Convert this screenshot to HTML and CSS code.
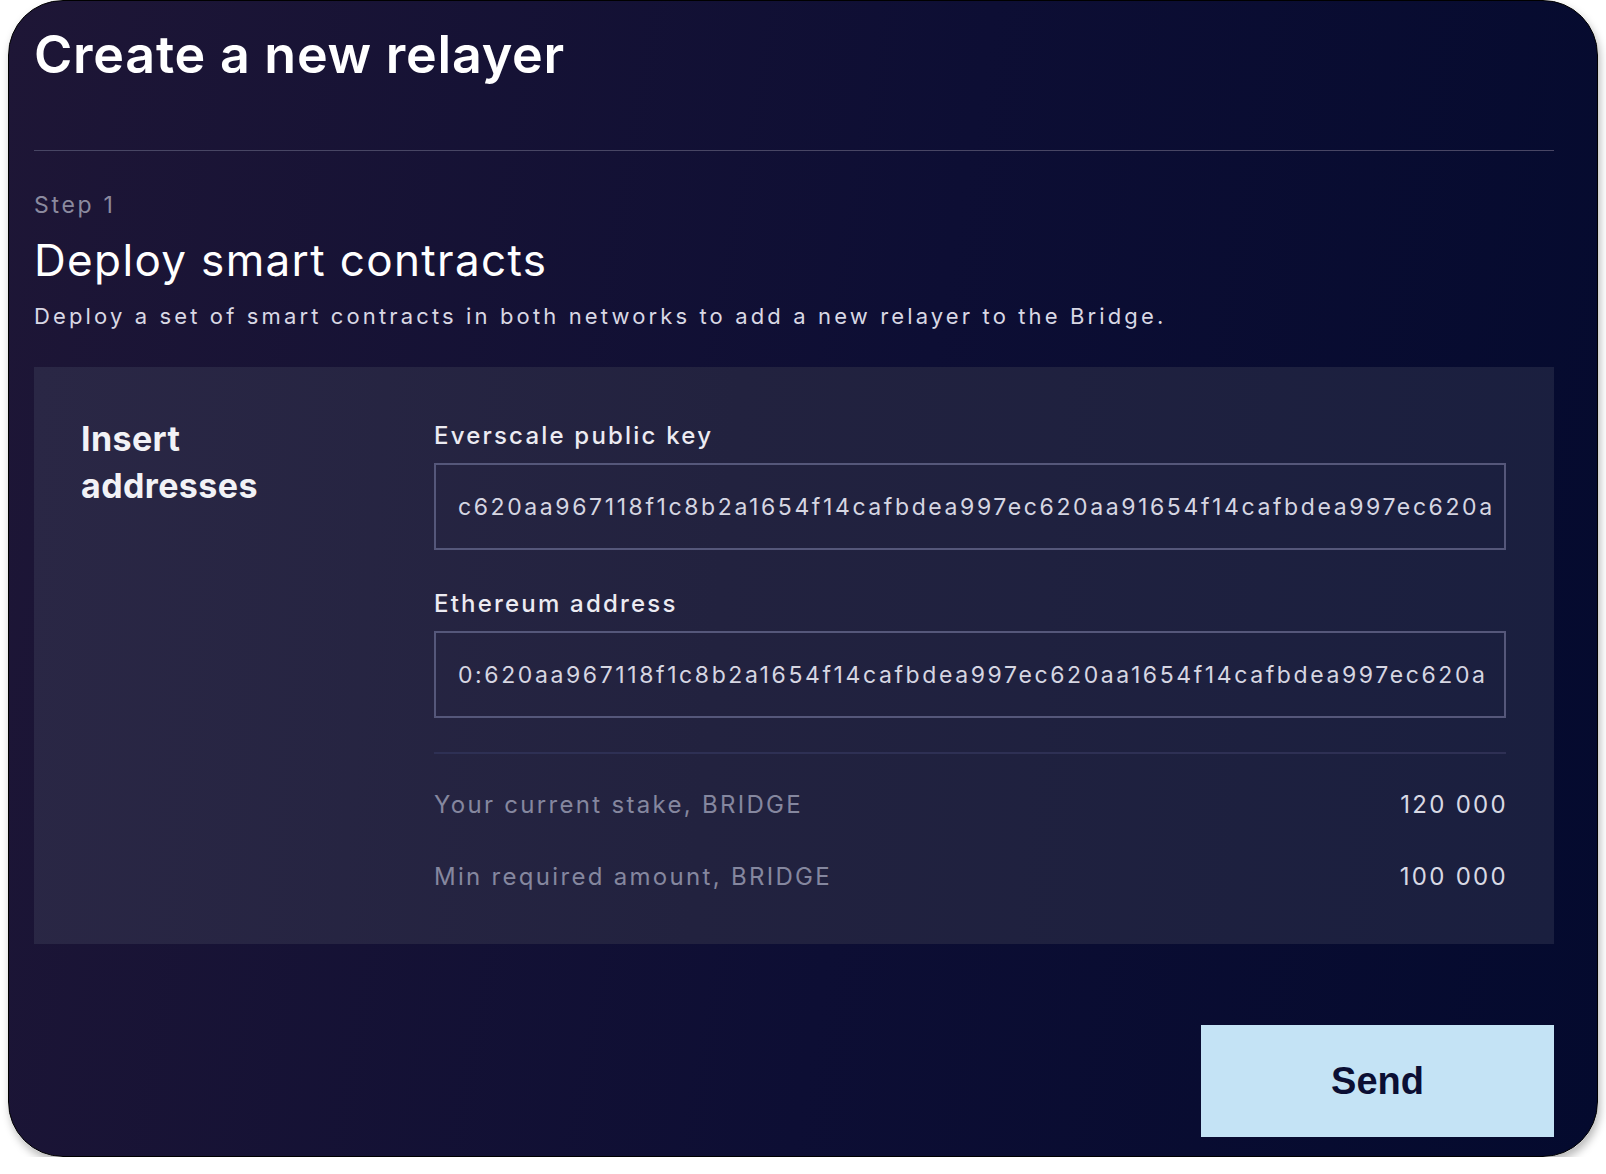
FILE: index.html
```html
<!DOCTYPE html>
<html lang="en">
<head>
<meta charset="utf-8">
<title>Create a new relayer</title>
<link rel="stylesheet" href="styles.css">
</head>
<body>
<div class="card">
  <header class="card-header">
    <h1 class="title">Create a new relayer</h1>
  </header>
  <section class="step">
    <div class="step-num">Step 1</div>
    <h2 class="step-title">Deploy smart contracts</h2>
    <p class="step-desc">Deploy a set of smart contracts in both networks to add a new relayer to the Bridge.</p>
  </section>
  <section class="panel">
    <div class="panel-side">
      <h3 class="panel-title">Insert<br>addresses</h3>
    </div>
    <div class="panel-main">
      <label class="field-label">Everscale public key</label>
      <div class="field-input">c620aa967118f1c8b2a1654f14cafbdea997ec620aa91654f14cafbdea997ec620a</div>
      <label class="field-label second">Ethereum address</label>
      <div class="field-input">0:620aa967118f1c8b2a1654f14cafbdea997ec620aa1654f14cafbdea997ec620a</div>
      <div class="summary">
        <div class="summary-row">
          <span class="summary-key">Your current stake, BRIDGE</span>
          <span class="summary-val">120 000</span>
        </div>
        <div class="summary-row">
          <span class="summary-key">Min required amount, BRIDGE</span>
          <span class="summary-val">100 000</span>
        </div>
      </div>
    </div>
  </section>
  <footer class="actions">
    <button class="send-btn">Send</button>
  </footer>
</div>
</body>
</html>
```
FILE: styles.css
```css
html, body {
  margin: 0;
  padding: 0;
  background: #ffffff;
}

body {
  font-family: "Inter", "Noto Sans", sans-serif;
  color: #ffffff;
}

.card {
  box-sizing: border-box;
  margin-left: 8px;
  width: 1590px;
  height: 1157px;
  border: 1px solid #000;
  border-radius: 55px;
  background: linear-gradient(100deg, #1e1636 0%, #0d0e34 55%, #040a2e 100%);
  box-shadow: 2px 5px 8px rgba(0, 0, 0, 0.28);
  padding: 0 43px 0 25px;
  display: flex;
  flex-direction: column;
}

.card-header {
  height: 150px;
  box-sizing: border-box;
  padding-top: 22px;
  border-bottom: 1px solid #484664;
}

.title {
  margin: 0;
  font-size: 52px;
  line-height: 64px;
  font-weight: 600;
  letter-spacing: 0.75px;
  color: #ffffff;
}

.step {
  padding-top: 41px;
}

.step-num {
  font-size: 23px;
  line-height: 26px;
  color: #8b8a9f;
  letter-spacing: 2.7px;
}

.step-title {
  margin: 16px 0 0;
  font-size: 44px;
  line-height: 52px;
  font-weight: 400;
  letter-spacing: 1.35px;
  color: #ffffff;
}

.step-desc {
  margin: 16px 0 0;
  font-size: 22px;
  line-height: 28px;
  letter-spacing: 3.13px;
  color: #d9d8e4;
}

.panel {
  margin-top: 37px;
  height: 577px;
  box-sizing: border-box;
  padding: 48px 48px 0 47px;
  background: linear-gradient(95deg, #2a2745 0%, #22223f 45%, #1a1f3f 100%);
  display: flex;
}

.panel-side {
  width: 353px;
  flex: none;
}

.panel-title {
  margin: 0;
  font-size: 34px;
  line-height: 47px;
  font-weight: 700;
  letter-spacing: 0.4px;
  color: #f2f2f6;
}

.panel-main {
  flex: 1;
  padding-top: 6px;
  display: flex;
  flex-direction: column;
}

.field-label {
  display: block;
  font-size: 24px;
  line-height: 30px;
  font-weight: 500;
  letter-spacing: 2.2px;
  color: #ecebf2;
}

.field-label.second {
  margin-top: 39px;
}

.field-input {
  margin-top: 12px;
  box-sizing: border-box;
  height: 87px;
  border: 2px solid #55577a;
  padding: 0 0 0 22px;
  display: flex;
  align-items: center;
  font-size: 23px;
  letter-spacing: 2.6px;
  color: #d6d6e2;
  white-space: nowrap;
  overflow: hidden;
}

.summary {
  margin-top: 34px;
  border-top: 2px solid #2e3054;
  padding-top: 36px;
  display: flex;
  flex-direction: column;
  gap: 42px;
}

.summary-row {
  display: flex;
  justify-content: space-between;
  font-size: 24px;
  line-height: 30px;
  letter-spacing: 2.3px;
}

.summary-key {
  color: #85879f;
}

.summary-val {
  color: #d8d9e4;
  letter-spacing: 2.3px;
  margin-right: -2px;
}

.actions {
  margin-top: 81px;
  display: flex;
  justify-content: flex-end;
}

.send-btn {
  width: 353px;
  height: 112px;
  border: none;
  background: #c4e3f5;
  color: #0b0f33;
  font-family: "Liberation Sans", Arial, sans-serif;
  font-weight: 700;
  font-size: 38px;
  cursor: pointer;
}
```
